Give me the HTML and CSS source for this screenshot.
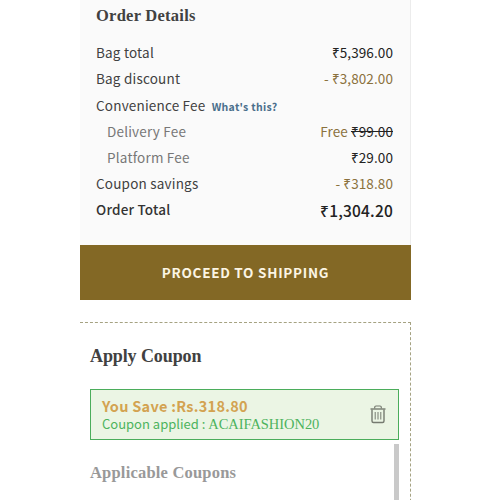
FILE: index.html
```html
<!DOCTYPE html>
<html lang="en">
<head>
  <meta charset="UTF-8" />
  <meta name="viewport" content="width=device-width, initial-scale=1" />
  <title>Order Details</title>
  <link rel="stylesheet" href="styles.css">
</head>
<body>

  <main class="checkout">
    <section class="order">
      <h2 class="order-title">Order Details</h2>
      <div class="row"><span>Bag total</span><span class="price">₹5,396.00</span></div>
      <div class="row"><span>Bag discount</span><span class="price saving">- ₹3,802.00</span></div>
      <div class="row"><span>Convenience Fee <a class="help">What's this?</a></span></div>
      <div class="row sub"><span>Delivery Fee</span><span class="price"><span class="saving">Free</span> <s>₹99.00</s></span></div>
      <div class="row sub"><span>Platform Fee</span><span class="price">₹29.00</span></div>
      <div class="row"><span>Coupon savings</span><span class="price saving">- ₹318.80</span></div>
      <div class="row total"><span>Order Total</span><span class="price">₹1,304.20</span></div>
    </section>

    <button class="proceed" type="button">PROCEED TO SHIPPING</button>

    <section class="coupons">
      <h2 class="coupons-title">Apply Coupon</h2>
      <div class="applied">
        <div>
          <p class="save">You Save :Rs.318.80</p>
          <p class="code">Coupon applied : <span>ACAIFASHION20</span></p>
        </div>
        <svg class="trash" width="16" height="19" viewBox="0 0 16 19" fill="none" stroke="#767b70">
          <path d="M0.5 4H15.5" stroke-width="1.4" />
          <path d="M4.7 3.5V2.2Q4.7 1 6 1H10Q11.3 1 11.3 2.2V3.5" stroke-width="1.2" />
          <path d="M2 4.5V16Q2 17.5 3.5 17.5H12.5Q14 17.5 14 16V4.5" stroke-width="1.4" />
          <path d="M5.2 7V14.5M8 7V14.5M10.8 7V14.5" stroke-width="1" />
        </svg>
      </div>
      <div class="coupon-list">
        <h3>Applicable Coupons</h3>
      </div>
    </section>
  </main>

</body>
</html>
```

FILE: styles.css
```css
/* Reset & Base */
* { box-sizing: border-box; margin: 0; padding: 0; }
body {
  font-family: 'Noto Sans CJK SC', 'Noto Sans', sans-serif;
  font-size: 13.5px;
  background: #fff;
  color: #414141;
  height: 500px;
  overflow: hidden;
}
.checkout {
  width: 331px;
  margin-left: 80px;
  white-space: nowrap;
}

/* Order summary */
.order {
  height: 245px;
  padding: 5px 17px 0 16px;
  background: #fafafa;
  border-right: 1px solid #ececec;
}
.order-title, .coupons-title, .coupon-list h3 {
  font-family: 'Liberation Serif', serif;
  font-weight: 700;
}
.order-title {
  font-size: 16.5px;
  line-height: 22px;
  margin-bottom: 12px;
  letter-spacing: 0.25px;
}
.row {
  display: flex;
  justify-content: space-between;
  height: 26.4px;
  line-height: 26px;
  letter-spacing: 0.2px;
}
.price { color: #222; letter-spacing: 0.1px; }
.saving { color: #8a713d; }
.help {
  margin-left: 3px;
  font-size: 10.5px;
  font-weight: 700;
  letter-spacing: 0.3px;
  color: #4a6f8c;
}
.sub {
  padding-left: 11px;
  height: 25.7px;
  color: #777;
}
.total { font-weight: 500; color: #333; }
.total .price { font-size: 15.5px; line-height: 29px; letter-spacing: 0.2px; }

/* Proceed */
.proceed {
  display: block;
  width: 100%;
  height: 55px;
  padding-bottom: 2px;
  border: none;
  background: #836825;
  color: #fbf5e4;
  font-family: inherit;
  font-size: 13.5px;
  font-weight: 700;
  letter-spacing: 0.73px;
}

/* Coupons */
.coupons {
  height: 200px;
  margin-top: 22px;
  padding: 21px 12px 0 10px;
  border-top: 1px dashed #a5a282;
  border-right: 1px dashed #a5a282;
}
.coupons-title {
  font-size: 18px;
  line-height: 24px;
  margin-bottom: 21px;
  letter-spacing: -0.1px;
}
.applied {
  display: flex;
  justify-content: space-between;
  width: 309px;
  height: 51px;
  padding: 6px 12px 0 11px;
  border: 1px solid #4bad5b;
  background: #ebf5e4;
}
.save {
  font-size: 14.5px;
  font-weight: 700;
  line-height: 19px;
  letter-spacing: 0.27px;
  color: #d3a351;
}
.code {
  font-size: 13px;
  line-height: 18px;
  color: #4db35d;
}
.code span {
  font-family: 'Liberation Serif', serif;
  font-size: 14.5px;
  letter-spacing: -0.05px;
}
.trash { margin-top: 9px; }
.coupon-list {
  width: 309px;
  height: 60px;
  margin-top: 4px;
  padding-top: 18px;
  border-right: 5px solid #c9c9c9;
}
.coupon-list h3 {
  font-size: 16.5px;
  line-height: 22px;
  letter-spacing: 0.2px;
  color: #999;
}
```
